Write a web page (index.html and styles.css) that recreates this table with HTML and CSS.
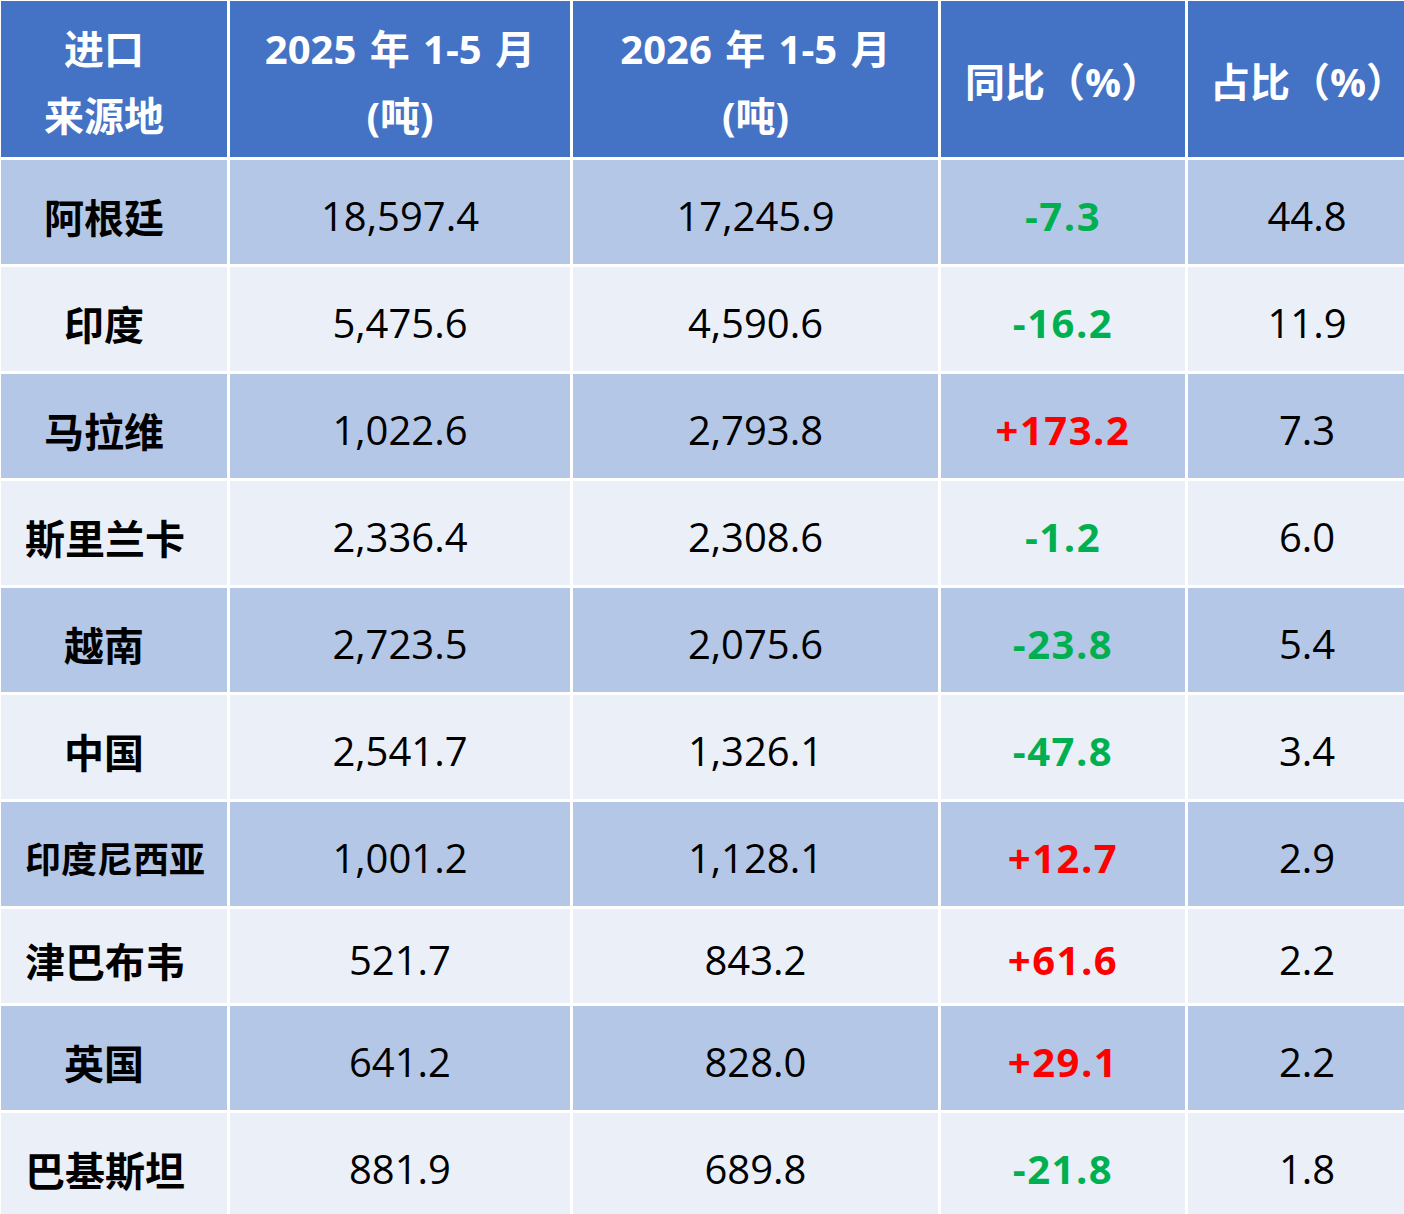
FILE: index.html
```html
<!DOCTYPE html>
<html lang="zh-CN">
<head>
<meta charset="utf-8">
<title>进口来源地</title>
<link rel="stylesheet" href="styles.css">
</head>
<body>
<div class="grid">
  <div class="cell head c1"><div class="txt"><span class="ln">进口</span><span class="ln">来源地</span></div></div>
  <div class="cell head"><div class="txt"><span class="ln">2025 年 1-5 月</span><span class="ln">(吨)</span></div></div>
  <div class="cell head"><div class="txt"><span class="ln">2026 年 1-5 月</span><span class="ln">(吨)</span></div></div>
  <div class="cell head"><div class="txt">同比（%）</div></div>
  <div class="cell head c5"><div class="txt">占比（%）</div></div>

  <div class="cell dark c1 name"><div class="txt">阿根廷</div></div>
  <div class="cell dark"><div class="txt">18,597.4</div></div>
  <div class="cell dark"><div class="txt">17,245.9</div></div>
  <div class="cell dark down"><div class="txt">-7.3</div></div>
  <div class="cell dark c5"><div class="txt">44.8</div></div>

  <div class="cell light c1 name"><div class="txt">印度</div></div>
  <div class="cell light"><div class="txt">5,475.6</div></div>
  <div class="cell light"><div class="txt">4,590.6</div></div>
  <div class="cell light down"><div class="txt">-16.2</div></div>
  <div class="cell light c5"><div class="txt">11.9</div></div>

  <div class="cell dark c1 name"><div class="txt">马拉维</div></div>
  <div class="cell dark"><div class="txt">1,022.6</div></div>
  <div class="cell dark"><div class="txt">2,793.8</div></div>
  <div class="cell dark up"><div class="txt">+173.2</div></div>
  <div class="cell dark c5"><div class="txt">7.3</div></div>

  <div class="cell light c1 name"><div class="txt">斯里兰卡</div></div>
  <div class="cell light"><div class="txt">2,336.4</div></div>
  <div class="cell light"><div class="txt">2,308.6</div></div>
  <div class="cell light down"><div class="txt">-1.2</div></div>
  <div class="cell light c5"><div class="txt">6.0</div></div>

  <div class="cell dark c1 name"><div class="txt">越南</div></div>
  <div class="cell dark"><div class="txt">2,723.5</div></div>
  <div class="cell dark"><div class="txt">2,075.6</div></div>
  <div class="cell dark down"><div class="txt">-23.8</div></div>
  <div class="cell dark c5"><div class="txt">5.4</div></div>

  <div class="cell light c1 name"><div class="txt">中国</div></div>
  <div class="cell light"><div class="txt">2,541.7</div></div>
  <div class="cell light"><div class="txt">1,326.1</div></div>
  <div class="cell light down"><div class="txt">-47.8</div></div>
  <div class="cell light c5"><div class="txt">3.4</div></div>

  <div class="cell dark c1 name long"><div class="txt">印度尼西亚</div></div>
  <div class="cell dark"><div class="txt">1,001.2</div></div>
  <div class="cell dark"><div class="txt">1,128.1</div></div>
  <div class="cell dark up"><div class="txt">+12.7</div></div>
  <div class="cell dark c5"><div class="txt">2.9</div></div>

  <div class="cell light c1 name"><div class="txt">津巴布韦</div></div>
  <div class="cell light"><div class="txt">521.7</div></div>
  <div class="cell light"><div class="txt">843.2</div></div>
  <div class="cell light up"><div class="txt">+61.6</div></div>
  <div class="cell light c5"><div class="txt">2.2</div></div>

  <div class="cell dark c1 name"><div class="txt">英国</div></div>
  <div class="cell dark"><div class="txt">641.2</div></div>
  <div class="cell dark"><div class="txt">828.0</div></div>
  <div class="cell dark up"><div class="txt">+29.1</div></div>
  <div class="cell dark c5"><div class="txt">2.2</div></div>

  <div class="cell light c1 name"><div class="txt">巴基斯坦</div></div>
  <div class="cell light"><div class="txt">881.9</div></div>
  <div class="cell light"><div class="txt">689.8</div></div>
  <div class="cell light down"><div class="txt">-21.8</div></div>
  <div class="cell light c5"><div class="txt">1.8</div></div>
</div>
</body>
</html>
```
FILE: styles.css
```css
html, body {
  margin: 0;
  padding: 0;
  background: #ffffff;
}

body {
  width: 1404px;
  height: 1214px;
  overflow: hidden;
  font-family: "Open Sans", "Noto Sans CJK SC", sans-serif;
}

.grid {
  display: grid;
  grid-template-columns: 226px 340px 365px 244px 216px;
  grid-template-rows: 156px repeat(7, 104px) 94px 104px 104px;
  gap: 3px;
  padding: 1px 0 0 1px;
  background: #ffffff;
}

.cell {
  display: flex;
  align-items: center;
  min-width: 0;
  font-size: 40px;
  color: #000000;
  box-sizing: border-box;
  padding-top: 8px;
}

.txt {
  width: 100%;
  text-align: center;
  white-space: nowrap;
  line-height: 1.2;
}

.head {
  background: #4472C4;
  color: #ffffff;
  font-weight: 700;
  padding-top: 6px;
}

.head .ln {
  display: block;
  line-height: 67px;
  word-spacing: 3px;
}

.dark {
  background: #B4C7E7;
}

.light {
  background: #EBF0F8;
}

.c1 {
  padding-left: 24px;
  padding-right: 44px;
}

.c5 {
  padding-left: 22px;
}

.name {
  font-family: "Noto Sans CJK SC", sans-serif;
  font-weight: 700;
}

.long {
  font-size: 36px;
}

.down {
  color: #00B050;
  font-weight: 700;
  letter-spacing: 1.5px;
}

.up {
  color: #FF0000;
  font-weight: 700;
  letter-spacing: 1.5px;
}
```
